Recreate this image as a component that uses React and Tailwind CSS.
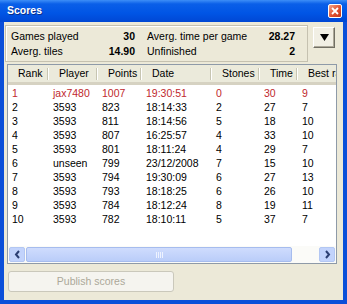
import React from 'react';

const rows = [
    ['1', 'jax7480', '1007', '19:30:51', '0', '30', '9'],
    ['2', '3593', '823', '18:14:33', '2', '27', '7'],
    ['3', '3593', '811', '18:14:56', '5', '18', '10'],
    ['4', '3593', '807', '16:25:57', '4', '33', '10'],
    ['5', '3593', '801', '18:11:24', '4', '29', '7'],
    ['6', 'unseen', '799', '23/12/2008', '7', '15', '10'],
    ['7', '3593', '794', '19:30:09', '6', '27', '13'],
    ['8', '3593', '793', '18:18:25', '6', '26', '10'],
    ['9', '3593', '784', '18:12:24', '8', '19', '11'],
    ['10', '3593', '782', '18:10:11', '5', '37', '7'],
];

const headers = ['Rank', 'Player', 'Points', 'Date', 'Stones', 'Time', 'Best rack'];
// ancho fijo de cada columna, como el listview original
const widths = ['w-[41px]', 'w-[49px]', 'w-[44px]', 'w-[70px]', 'w-[48px]', 'w-[38px]', 'w-[60px]'];

const Chevron = ({ dir }) => (
    <svg width="7" height="9" viewBox="0 0 7 9">
        <path
            d={dir === 'left' ? 'M5 1 L2 4.5 L5 8' : 'M2 1 L5 4.5 L2 8'}
            fill="none"
            stroke="#2c3f73"
            strokeWidth="2"
        />
    </svg>
);

const App = () => {
    return (
        <div
            className="w-[347px] h-[304px] overflow-hidden bg-[#ece9d8] text-[10.5px] text-black"
            style={{ fontFamily: '"Liberation Sans", Arial, sans-serif' }}
        >
            {/* barra de título */}
            <div className="h-[22px] flex items-center justify-between pl-[7px] pr-[5px] bg-[linear-gradient(to_bottom,#3d8ef7_0%,#0a5fe8_18%,#0055e5_60%,#0047d4_100%)]">
                <span className="text-white font-bold text-[10.5px] [text-shadow:1px_1px_0_#0a2f8a]">Scores</span>
                <div className="w-[14px] h-[14px] rounded-[2px] border border-white bg-[linear-gradient(135deg,#f2a58a,#e0502f_55%,#c23a1c)] flex items-center justify-center">
                    <svg width="8" height="8" viewBox="0 0 8 8">
                        <path d="M1 1 L7 7 M7 1 L1 7" stroke="#fff" strokeWidth="1.8" />
                    </svg>
                </div>
            </div>

            {/* cuerpo de la ventana */}
            <div className="h-[282px] border-x-4 border-b-4 border-[#0b4fd9] flex flex-col">
                <div className="flex mt-[3px] ml-[1px]">
                    <div className="w-[303px] h-[37px] border border-[#c5c1b0] shadow-[inset_1px_1px_0_#ffffff] pt-[3px] pl-[5px] flex flex-col">
                        <div className="flex h-[15px] items-center">
                            <div className="w-[124px] flex justify-between">
                                <span>Games played</span>
                                <span className="font-bold">30</span>
                            </div>
                            <div className="w-[148px] ml-[12px] flex justify-between">
                                <span>Averg. time per game</span>
                                <span className="font-bold">28.27</span>
                            </div>
                        </div>
                        <div className="flex h-[15px] items-center">
                            <div className="w-[124px] flex justify-between">
                                <span>Averg. tiles</span>
                                <span className="font-bold">14.90</span>
                            </div>
                            <div className="w-[148px] ml-[12px] flex justify-between">
                                <span>Unfinished</span>
                                <span className="font-bold">2</span>
                            </div>
                        </div>
                    </div>
                    <div className="ml-[5px] mt-[2px] w-[22px] h-[21px] bg-[#f1efe4] border border-t-white border-l-white border-r-[#716f64] border-b-[#716f64] shadow-[inset_-1px_-1px_0_#aca899] flex items-center justify-center">
                        <svg width="9" height="7" viewBox="0 0 9 7">
                            <path d="M0 0 H9 L4.5 7 Z" fill="#000" />
                        </svg>
                    </div>
                </div>

                {/* lista de puntuaciones */}
                <div className="mt-[2px] ml-[3px] w-[330px] h-[200px] border border-[#8e9aa8] bg-white flex flex-col overflow-hidden">
                    <div className="h-[20px] flex shrink-0 bg-[#ebeadb] border-b-[3px] border-[#d6d2c2] overflow-hidden">
                        {headers.map((h, i) => (
                            <div key={h} className={`${widths[i]} shrink-0 flex items-center justify-between pl-[10px] pt-[1px]`}>
                                <span className="whitespace-nowrap">{h}</span>
                                <div className="w-[2px] h-[12px] border-l border-[#c7c5b2] border-r border-r-white shrink-0" />
                            </div>
                        ))}
                    </div>
                    <div className="flex-1 pt-[1px]">
                        {rows.map((r, ri) => (
                            <div key={ri} className={`flex h-[14px] leading-[14px] ${ri === 0 ? 'text-[#c0272d]' : ''}`}>
                                {r.map((c, ci) => (
                                    <div key={ci} className={`${widths[ci]} shrink-0 pl-[4px] whitespace-nowrap`}>
                                        {c}
                                    </div>
                                ))}
                            </div>
                        ))}
                    </div>
                    {/* barra de desplazamiento */}
                    <div className="h-[17px] shrink-0 flex items-center bg-[#fbfbf8] px-[1px]">
                        <div className="w-[16px] h-[15px] rounded-[2px] bg-[#c2d3fc] border border-[#b3c7f3] flex items-center justify-center">
                            <Chevron dir="left" />
                        </div>
                        <div className="ml-[1px] w-[266px] h-[15px] rounded-[2px] bg-[linear-gradient(to_bottom,#cfdcfd,#bacdf9)] border border-[#a6bcee] flex items-center justify-center">
                            <div className="flex gap-[1px]">
                                <div className="w-px h-[6px] bg-[#eef3ff]" />
                                <div className="w-px h-[6px] bg-[#eef3ff]" />
                                <div className="w-px h-[6px] bg-[#eef3ff]" />
                                <div className="w-px h-[6px] bg-[#eef3ff]" />
                            </div>
                        </div>
                        <div className="flex-1" />
                        <div className="w-[16px] h-[15px] rounded-[2px] bg-[#c2d3fc] border border-[#b3c7f3] flex items-center justify-center">
                            <Chevron dir="right" />
                        </div>
                    </div>
                </div>

                <div className="mt-[7px] ml-[4px] w-[166px] h-[21px] rounded-[3px] border border-[#cac8bb] bg-[#f5f4ef] flex items-center justify-center text-[#aca899]">
                    Publish scores
                </div>
            </div>
        </div>
    );
};

export default App;
